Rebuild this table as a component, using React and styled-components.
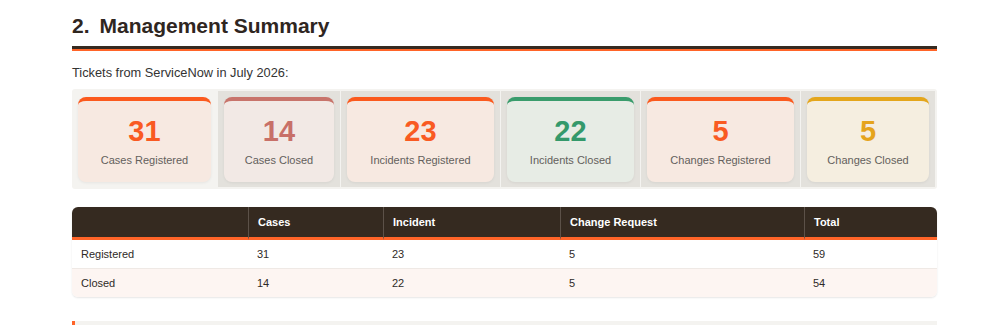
import React from "react";
import styled, { createGlobalStyle } from "styled-components";

const GlobalStyle = createGlobalStyle`
  html, body {
    margin: 0;
    padding: 0;
    background: #ffffff;
    font-family: "Liberation Sans", Arial, sans-serif;
    color: #333;
  }
`;

const Page = styled.div`
  width: 865px;
  margin-left: 72px;
  padding-top: 13px;
`;

const Heading = styled.h2`
  margin: 0;
  font-size: 21px;
  font-weight: 700;
  color: #2f261f;
  line-height: 26px;
  padding-bottom: 7px;
  border-bottom: 3px solid #352a20;
  position: relative;
  &:after {
    content: "";
    position: absolute;
    left: 0;
    right: 0;
    bottom: -5px;
    height: 2px;
    background: #ff6428;
  }
  span {
    margin-right: 10px;
  }
`;

const Intro = styled.p`
  margin: 16px 0 0;
  font-size: 12.8px;
  line-height: 16px;
  color: #333;
`;

const CardRow = styled.div`
  margin-top: 8px;
  display: grid;
  grid-template-columns: 145fr 122fr 159fr 139fr 159fr 134fr;
  gap: 1px;
  padding: 2px 2px 2px 0;
  background: #f4f3f0;
  border-radius: 3px;
`;

const Cell = styled.div`
  background: ${(p) => (p.$first ? "#f4f3f0" : "#e3e1dc")};
  padding: 6px 6px 5px 6px;
`;

const Card = styled.div`
  background: ${(p) => p.$bg};
  border-top: 4px solid ${(p) => p.$color};
  border-radius: 8px;
  height: 81px;
  box-shadow: 0 1px 3px rgba(0, 0, 0, 0.06);
  display: flex;
  flex-direction: column;
  align-items: center;
  text-align: center;
`;

const Num = styled.div`
  margin-top: 14px;
  font-size: 29px;
  font-weight: 700;
  line-height: 32px;
  color: ${(p) => p.$color};
`;

const Label = styled.div`
  margin-top: 7px;
  font-size: 11px;
  line-height: 13px;
  color: #63605c;
`;

const Table = styled.table`
  margin-top: 18px;
  width: 100%;
  border-collapse: separate;
  border-spacing: 0;
  border-radius: 6px;
  overflow: hidden;
  box-shadow: 0 1px 2px rgba(0, 0, 0, 0.1);
  font-size: 11px;
`;

const Th = styled.th`
  background: #352a20;
  color: #fff;
  font-weight: 700;
  text-align: left;
  height: 30px;
  padding: 0 9px;
  border-bottom: 3px solid #ff6428;
  border-left: ${(p) => (p.$first ? "none" : "1px solid #5c5148")};
`;

const Tr = styled.tr`
  background: ${(p) => (p.$alt ? "#fdf5f2" : "#ffffff")};
`;

const Td = styled.td`
  height: 28px;
  padding: 0 9px;
  color: #2e2a27;
  border-bottom: ${(p) => (p.$last ? "none" : "1px solid #efe9e5")};
`;

const NextBox = styled.div`
  margin-top: 24px;
  height: 40px;
  background: #f4f3f0;
  border-left: 3px solid #ff6428;
`;

const cards = [
  { n: 31, label: "Cases Registered", color: "#fb5a1e", num: "#f95a22", bg: "#f7e9e1" },
  { n: 14, label: "Cases Closed", color: "#c8746b", num: "#c87068", bg: "#f2e9e5" },
  { n: 23, label: "Incidents Registered", color: "#fb5a1e", num: "#f95a22", bg: "#f7e9e1" },
  { n: 22, label: "Incidents Closed", color: "#3a9c6c", num: "#34996b", bg: "#e7ece5" },
  { n: 5, label: "Changes Registered", color: "#fb5a1e", num: "#f95a22", bg: "#f7e9e1" },
  { n: 5, label: "Changes Closed", color: "#e4a61c", num: "#e5a41c", bg: "#f5eee0" },
];

const rows = [
  ["Registered", 31, 23, 5, 59],
  ["Closed", 14, 22, 5, 54],
];

export default function App() {
  return (
    <>
      <GlobalStyle />
      <Page>
        <Heading>
          <span>2.</span>Management Summary
        </Heading>
        <Intro>Tickets from ServiceNow in July 2026:</Intro>
        <CardRow>
          {cards.map((c, i) => (
            <Cell key={c.label} $first={i === 0}>
              <Card $bg={c.bg} $color={c.color}>
                <Num $color={c.num}>{c.n}</Num>
                <Label>{c.label}</Label>
              </Card>
            </Cell>
          ))}
        </CardRow>
        <Table>
          <colgroup>
            <col style={{ width: 176 }} />
            <col style={{ width: 135 }} />
            <col style={{ width: 177 }} />
            <col style={{ width: 244 }} />
            <col style={{ width: 133 }} />
          </colgroup>
          <thead>
            <tr>
              <Th $first></Th>
              <Th>Cases</Th>
              <Th>Incident</Th>
              <Th>Change Request</Th>
              <Th>Total</Th>
            </tr>
          </thead>
          <tbody>
            {rows.map((r, i) => (
              <Tr key={r[0]} $alt={i % 2 === 1}>
                {r.map((v, j) => (
                  <Td key={j} $last={i === rows.length - 1}>
                    {v}
                  </Td>
                ))}
              </Tr>
            ))}
          </tbody>
        </Table>
        <NextBox />
      </Page>
    </>
  );
}
